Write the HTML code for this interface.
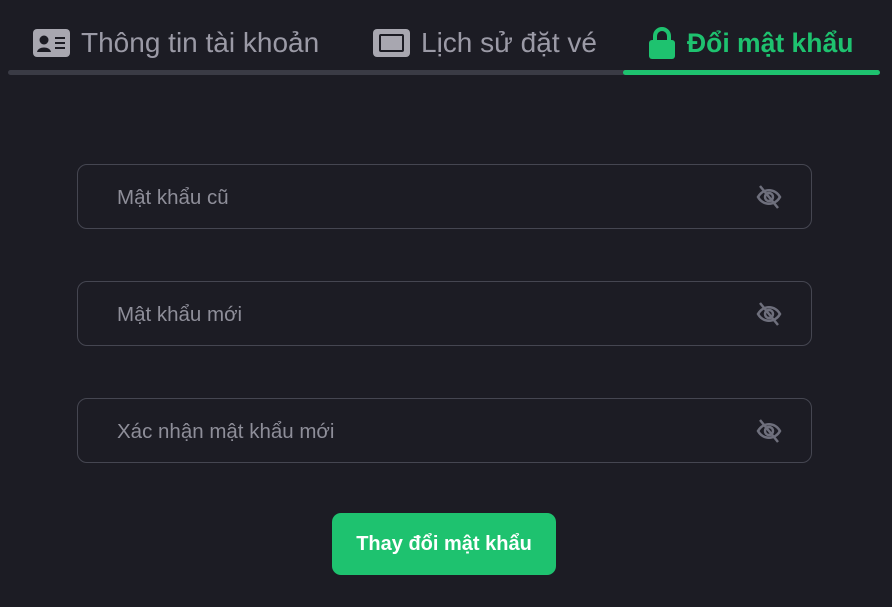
<!DOCTYPE html><html><head><meta charset="utf-8"><style>
body{margin:0;width:892px;height:607px;background:#1c1c24;font-family:"Liberation Sans",sans-serif;position:relative;overflow:hidden}
.tab{position:absolute;top:25px;font-size:28px;color:#9b9aa6;display:flex;align-items:center;gap:11px;height:36px}
.bar{position:absolute;top:70px;height:5px;border-radius:3px}
.in{position:absolute;left:77px;width:735px;height:65px;border:1px solid #454651;border-radius:10px;box-sizing:border-box}
.in span{position:absolute;left:39px;top:21px;font-size:20.5px;color:#8e8e99}
.in svg{position:absolute;right:28px;top:18px}
.btn{position:absolute;left:332px;top:513px;width:224px;height:62px;background:#1ec26f;border-radius:9px;color:#fff;font-weight:bold;font-size:20px;text-align:center;line-height:62px}
</style></head><body>
<div class="tab" style="left:33px"><svg width="37" height="28" viewBox="0 0 37 28"><rect width="37" height="28" rx="4" fill="#a8a7b0"/><circle cx="11" cy="11" r="4.5" fill="#1c1c24"/><path d="M4 23c1-6 13-6 14 0z" fill="#1c1c24"/><rect x="22" y="8" width="10" height="2" fill="#1c1c24"/><rect x="22" y="13" width="10" height="2" fill="#1c1c24"/><rect x="22" y="18" width="10" height="2" fill="#1c1c24"/></svg>Thông tin tài khoản</div>
<div class="tab" style="left:373px"><svg width="37" height="28" viewBox="0 0 37 28"><rect width="37" height="28" rx="4" fill="#a8a7b0"/><rect x="6" y="5" width="25" height="18" rx="2" fill="#1c1c24"/><rect x="8" y="7" width="21" height="14" fill="#a8a7b0"/></svg>Lịch sử đặt vé</div>
<div class="tab" style="left:648px;color:#1ec26f;font-weight:bold;font-size:26.5px"><svg width="28" height="32" viewBox="0 0 28 32"><path d="M7 14V9a7 7 0 0 1 14 0v5" stroke="#1ec26f" stroke-width="4" fill="none"/><rect x="1" y="13" width="26" height="19" rx="3" fill="#1ec26f"/></svg>Đổi mật khẩu</div>
<div class="bar" style="left:8px;width:620px;background:#3a3b45"></div>
<div class="bar" style="left:623px;width:257px;background:#1ec26f"></div>
<div class="in" style="top:164px"><span>Mật khẩu cũ</span><svg width="28" height="28" viewBox="0 0 28 28" fill="none" stroke="#6e6f7c" stroke-width="2.5"><path d="M3 14c5-9 17-9 22 0-5 9-17 9-22 0z"/><circle cx="14" cy="14" r="4"/><path d="M5 3l18 22"/></svg></div>
<div class="in" style="top:281px"><span>Mật khẩu mới</span><svg width="28" height="28" viewBox="0 0 28 28" fill="none" stroke="#6e6f7c" stroke-width="2.5"><path d="M3 14c5-9 17-9 22 0-5 9-17 9-22 0z"/><circle cx="14" cy="14" r="4"/><path d="M5 3l18 22"/></svg></div>
<div class="in" style="top:398px"><span>Xác nhận mật khẩu mới</span><svg width="28" height="28" viewBox="0 0 28 28" fill="none" stroke="#6e6f7c" stroke-width="2.5"><path d="M3 14c5-9 17-9 22 0-5 9-17 9-22 0z"/><circle cx="14" cy="14" r="4"/><path d="M5 3l18 22"/></svg></div>
<div class="btn">Thay đổi mật khẩu</div>
</body></html>
